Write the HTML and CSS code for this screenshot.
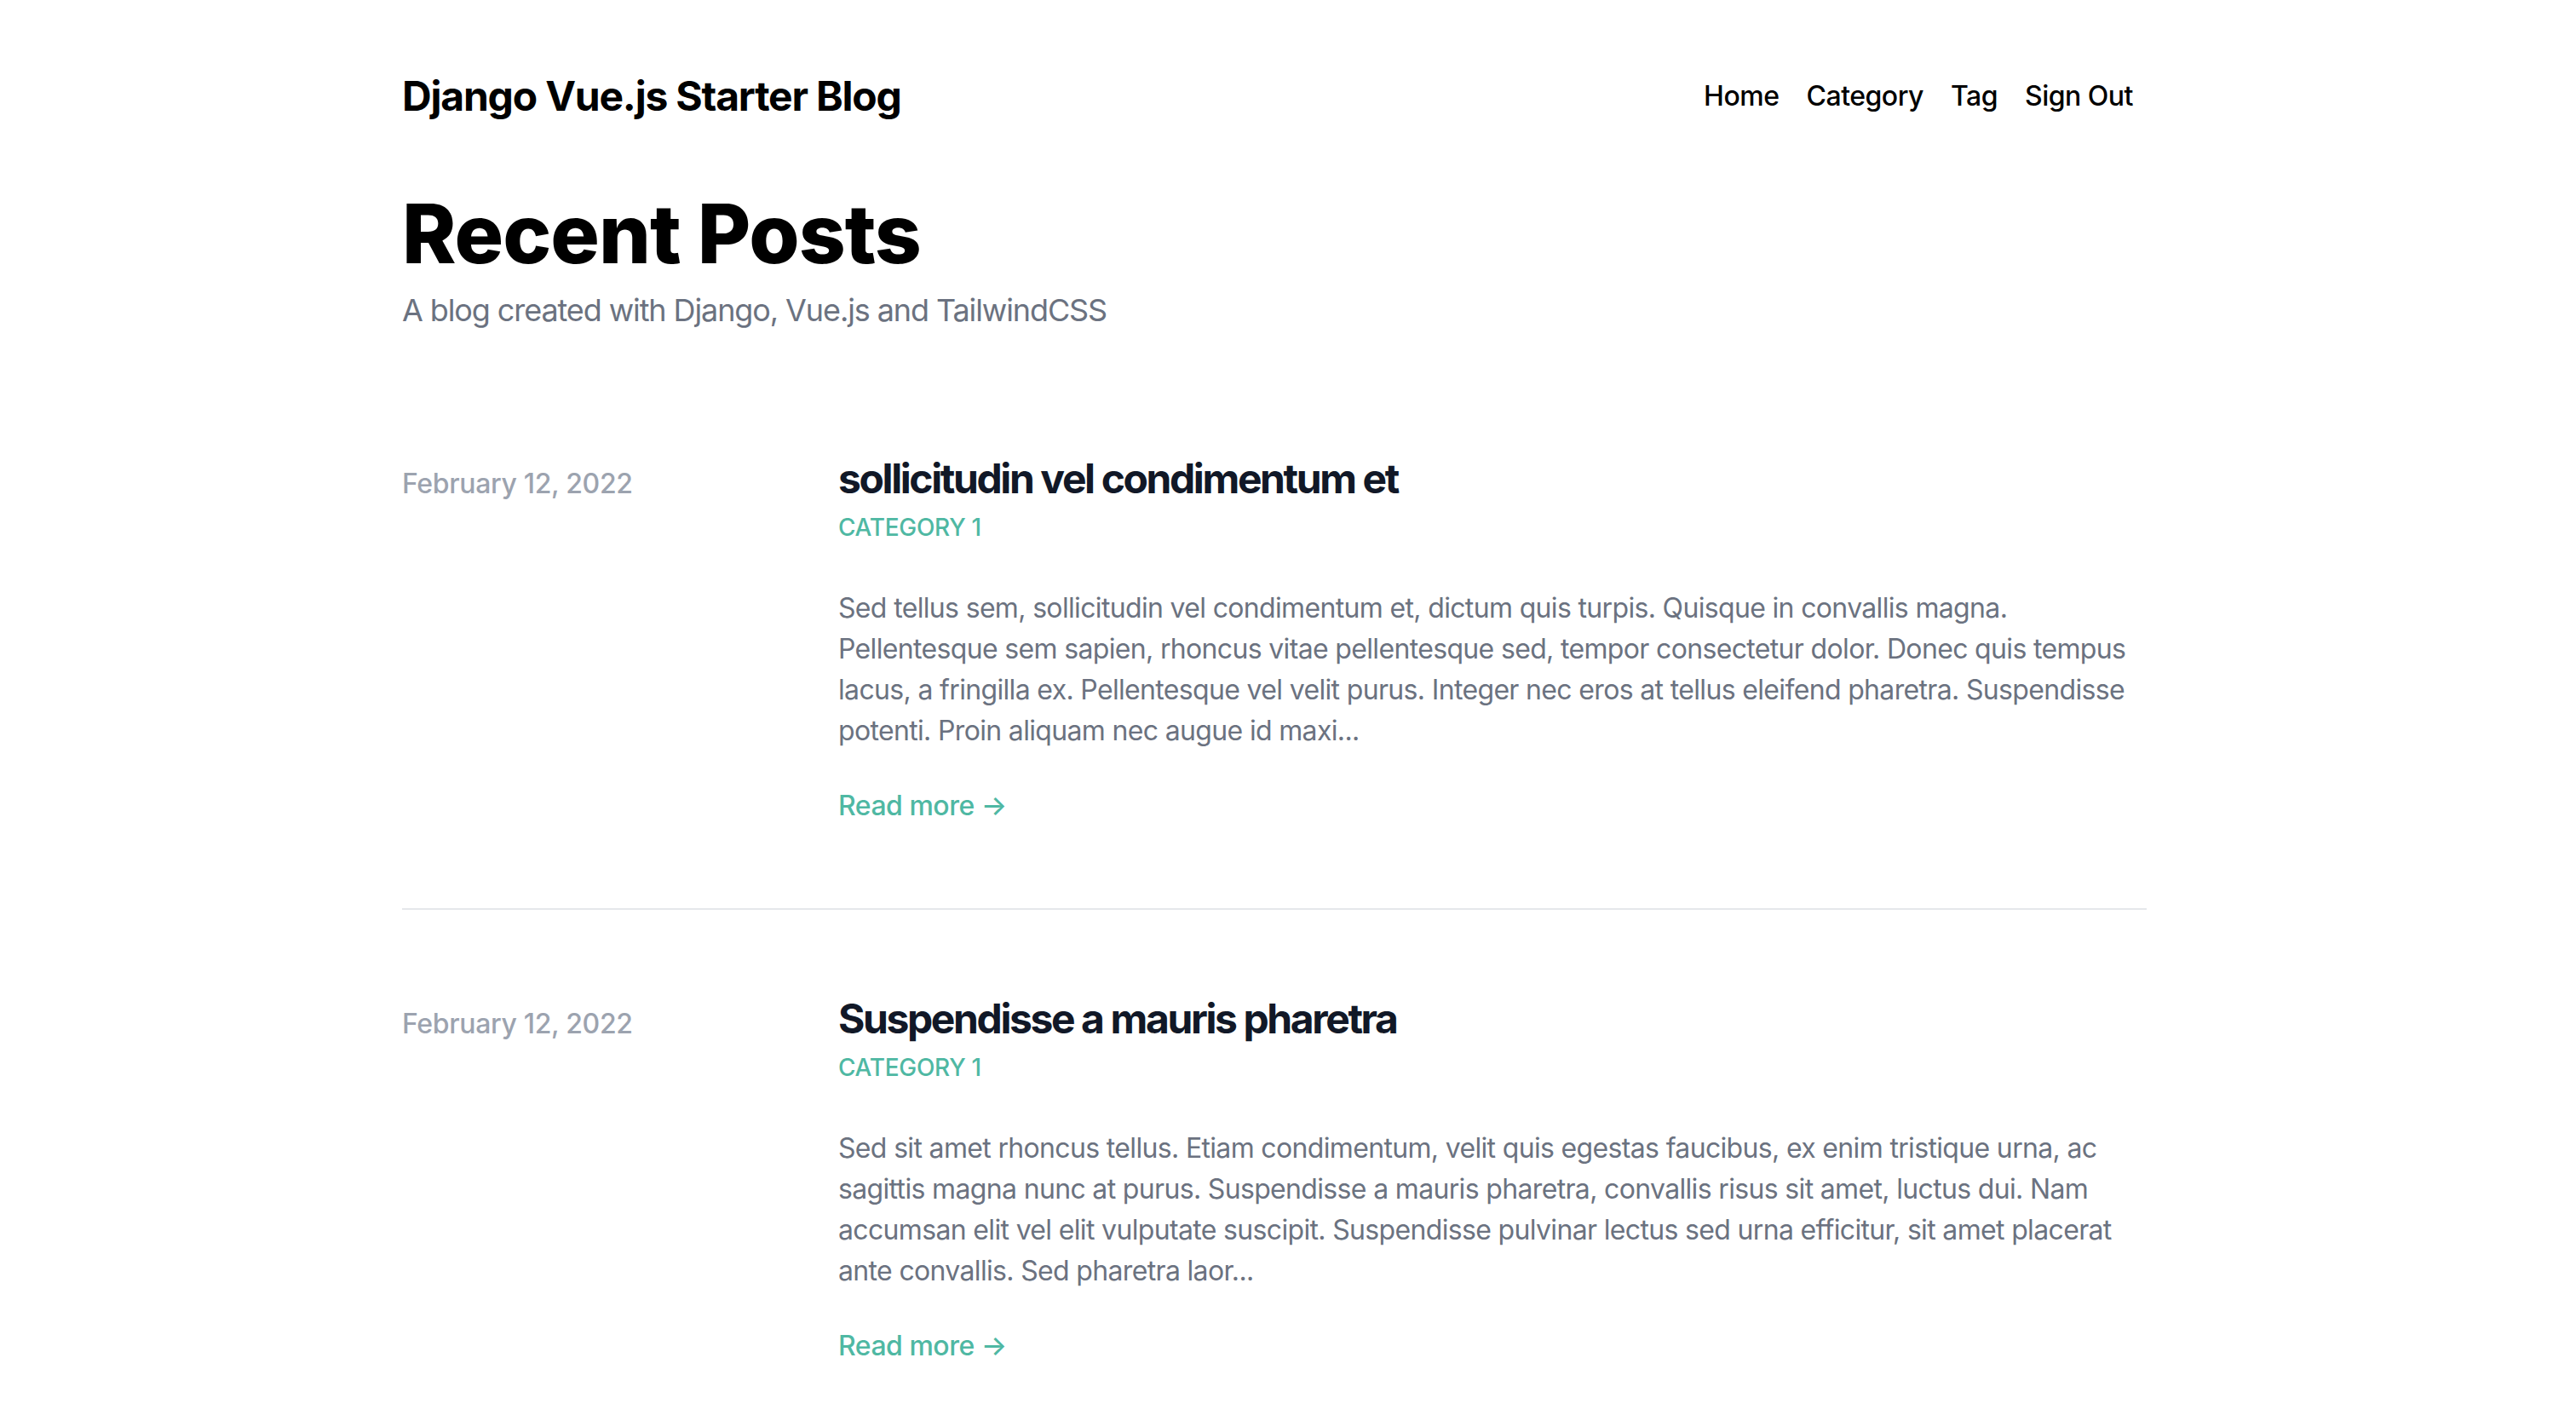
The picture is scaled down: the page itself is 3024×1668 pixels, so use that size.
FILE: index.html
```html
<!DOCTYPE html>
<html lang="en">
<head>
<meta charset="utf-8">
<title>Django Vue.js Starter Blog</title>
<link rel="stylesheet" href="styles.css">
</head>
<body>
<div class="container">
  <header class="site-header">
    <a class="brand" href="#">Django Vue.js Starter Blog</a>
    <nav class="nav">
      <a href="#">Home</a>
      <a href="#">Category</a>
      <a href="#">Tag</a>
      <a href="#">Sign Out</a>
    </nav>
  </header>
  <section class="hero">
    <h1>Recent Posts</h1>
    <p class="subtitle">A blog created with Django, Vue.js and TailwindCSS</p>
  </section>
  <ul class="posts">
    <li class="post">
      <article class="post-grid">
        <div class="post-date">February 12, 2022</div>
        <div class="post-body">
          <h2>sollicitudin vel condimentum et</h2>
          <div class="tags"><a href="#">Category 1</a></div>
          <p class="excerpt">Sed tellus sem, sollicitudin vel condimentum et, dictum quis turpis. Quisque in convallis magna. Pellentesque sem sapien, rhoncus vitae pellentesque sed, tempor consectetur dolor. Donec quis tempus lacus, a fringilla ex. Pellentesque vel velit purus. Integer nec eros at tellus eleifend pharetra. Suspendisse potenti. Proin aliquam nec augue id maxi...</p>
          <a class="more" href="#">Read more →</a>
        </div>
      </article>
    </li>
    <li class="post">
      <article class="post-grid">
        <div class="post-date">February 12, 2022</div>
        <div class="post-body">
          <h2>Suspendisse a mauris pharetra</h2>
          <div class="tags"><a href="#">Category 1</a></div>
          <p class="excerpt">Sed sit amet rhoncus tellus. Etiam condimentum, velit quis egestas faucibus, ex enim tristique urna, ac sagittis magna nunc at purus. Suspendisse a mauris pharetra, convallis risus sit amet, luctus dui. Nam accumsan elit vel elit vulputate suscipit. Suspendisse pulvinar lectus sed urna efficitur, sit amet placerat ante convallis. Sed pharetra laor...</p>
          <a class="more" href="#">Read more →</a>
        </div>
      </article>
    </li>
  </ul>
</div>
</body>
</html>
```
FILE: styles.css
```css
* { box-sizing: border-box; }
html, body { margin: 0; padding: 0; background: #fff; }
body {
  font-family: Inter, "Noto Sans", "Liberation Sans", sans-serif;
  font-size: 32px;
  line-height: 48px;
  color: #111827;
  padding-right: 32px;
}
a { text-decoration: none; color: inherit; }
.container { max-width: 2048px; margin: 0 auto; }

.site-header {
  display: flex;
  justify-content: space-between;
  align-items: center;
  padding-top: 72px;
  height: 154px;
}
.brand {
  font-size: 48px;
  line-height: 64px;
  font-weight: 650;
  letter-spacing: -1.2px;
  color: #000;
}
.nav { display: flex; }
.nav a {
  padding: 16px;
  font-size: 32px;
  line-height: 48px;
  font-weight: 500;
  letter-spacing: -0.5px;
  color: #000;
}

.hero { padding-top: 72px; }
.hero h1 {
  margin: 0;
  font-size: 96px;
  line-height: 96px;
  font-weight: 800;
  letter-spacing: -1px;
  color: #000;
}
.subtitle {
  margin: 14px 0 0;
  font-size: 36px;
  line-height: 56px;
  letter-spacing: -1.1px;
  color: #6b7280;
}

.posts { list-style: none; margin: 42px 0 0; padding: 0; }
.post { padding: 96px 0; }
.post + .post { border-top: 2px solid #e5e7eb; }
.post-grid {
  display: grid;
  grid-template-columns: repeat(4, 1fr);
  align-items: baseline;
}
.post-date {
  font-size: 32px;
  line-height: 48px;
  font-weight: 500;
  letter-spacing: -0.35px;
  color: #9ca3af;
}
.post-body { grid-column: span 3; }
.post-body h2 {
  margin: 0;
  font-size: 48px;
  line-height: 64px;
  font-weight: 700;
  letter-spacing: -2.4px;
  color: #111827;
}
.tags { line-height: 48px; }
.tags a {
  font-size: 28px;
  font-weight: 500;
  letter-spacing: -0.3px;
  text-transform: uppercase;
  color: #4fb8a3;
  margin-right: 24px;
}
.excerpt {
  margin: 47px 0 0;
  font-size: 32px;
  line-height: 48px;
  letter-spacing: -0.66px;
  color: #6b7280;
}
.more {
  display: inline-block;
  margin-top: 40px;
  font-size: 32px;
  line-height: 48px;
  font-weight: 500;
  letter-spacing: -0.5px;
  color: #4fb8a3;
}
```
